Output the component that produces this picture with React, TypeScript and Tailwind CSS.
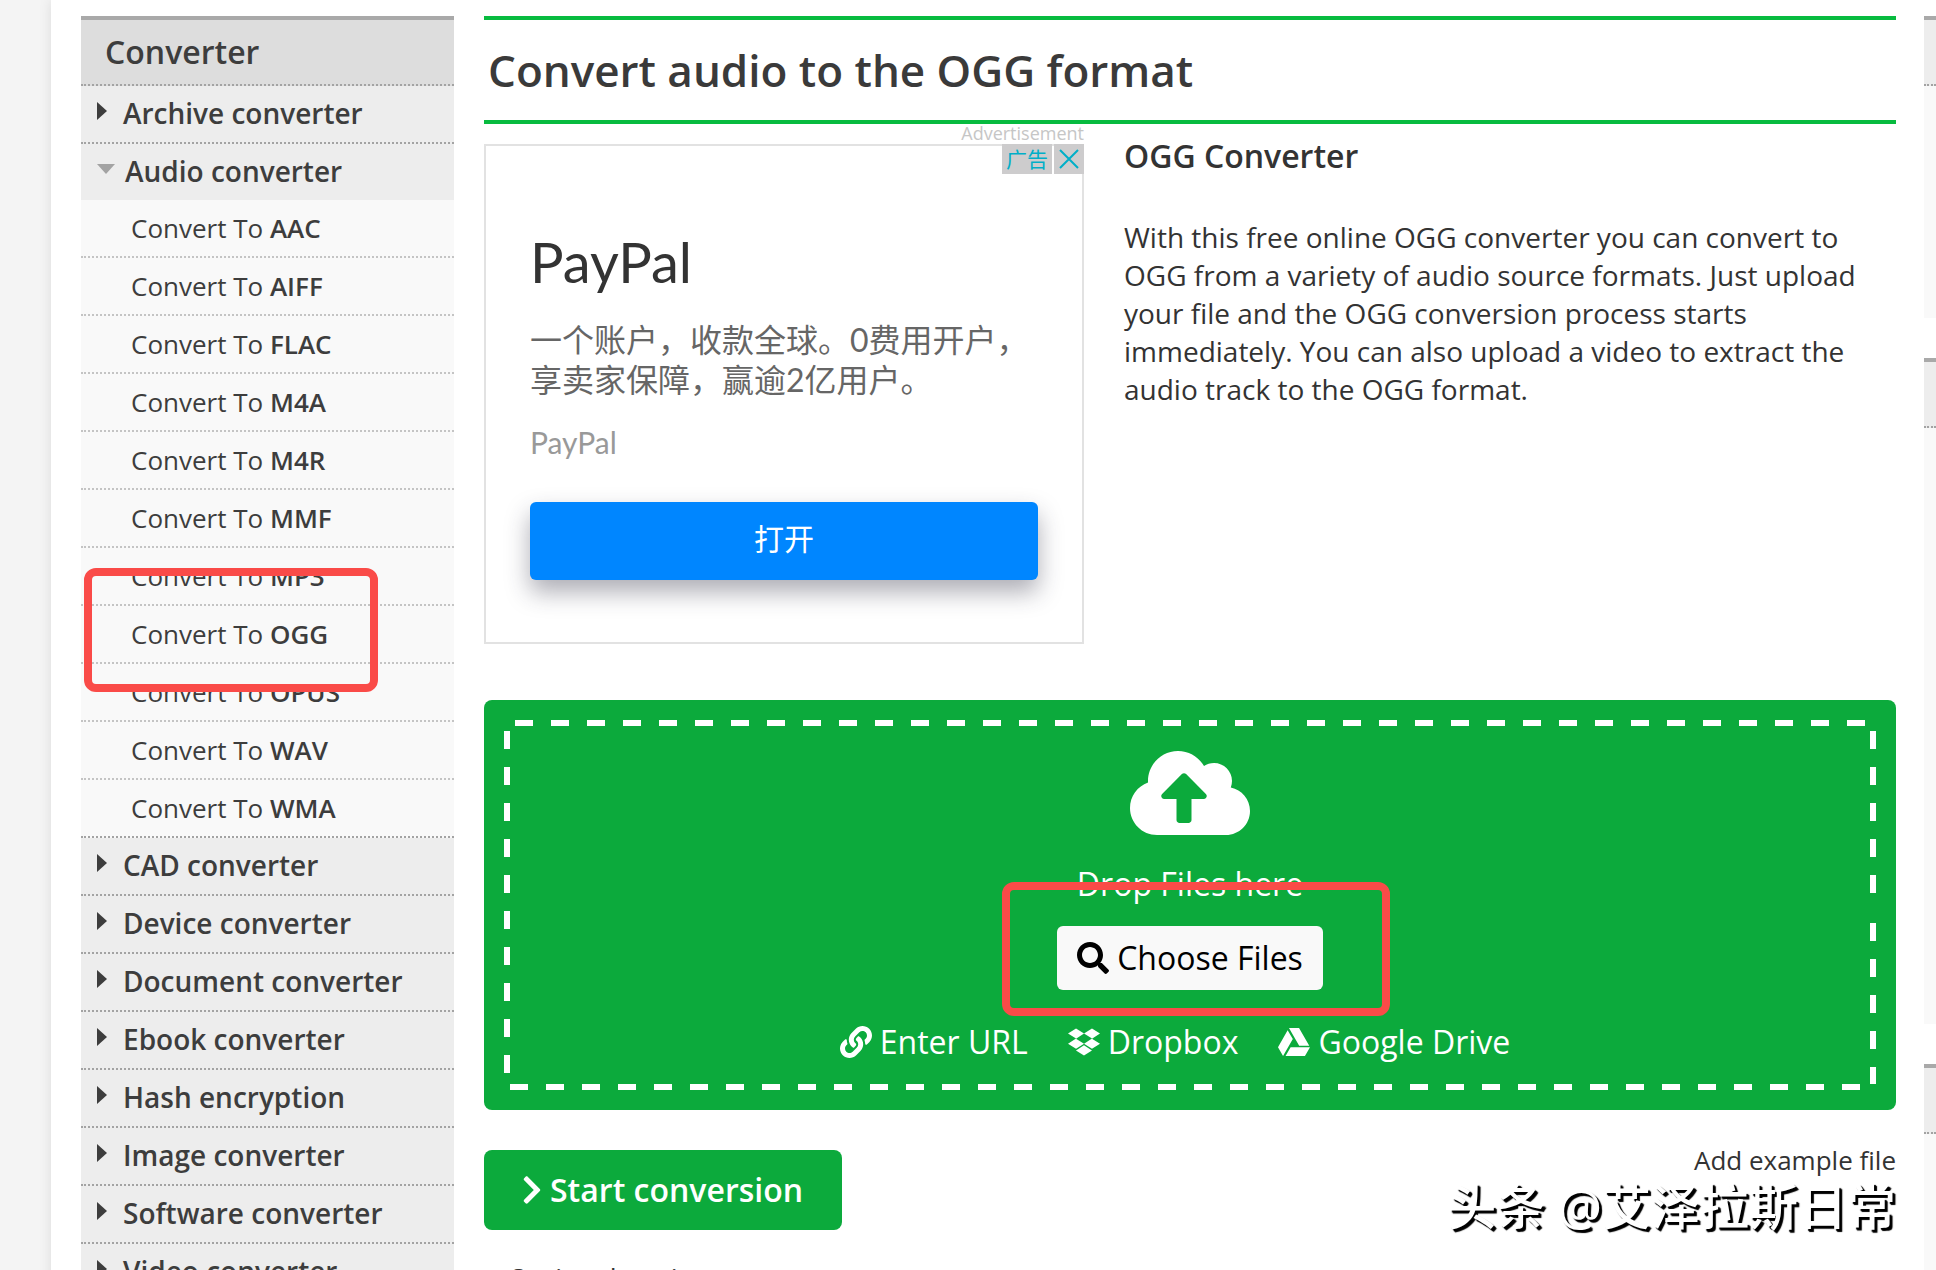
import { useState } from "react";
import {
  FaChevronRight,
  FaCloudUploadAlt,
  FaDropbox,
  FaGoogleDrive,
  FaLink,
  FaSearch,
} from "react-icons/fa";

const audioFormats = ["AAC", "AIFF", "FLAC", "M4A", "M4R", "MMF", "MP3", "OGG", "OPUS", "WAV", "WMA"];

const categories = [
  "Archive converter",
  "Audio converter",
  "CAD converter",
  "Device converter",
  "Document converter",
  "Ebook converter",
  "Hash encryption",
  "Image converter",
  "Software converter",
  "Video converter",
];

function Sidebar() {
  const [open, setOpen] = useState("Audio converter");

  return (
    <nav className="w-[373px] shrink-0 border-t-4 border-[#a9a9a9] text-[#3d3d3d]">
      <h2 className="flex h-[66px] items-center border-b-2 border-dotted border-[#a3a3a3] bg-[#ddd] pl-6 text-[32px] font-semibold">
        Converter
      </h2>
      <ul>
        {categories.map((name) => {
          const expanded = name === open;
          return (
            <li key={name}>
              <button
                type="button"
                aria-expanded={expanded}
                onClick={() => setOpen(expanded ? "" : name)}
                className={`flex w-full items-center bg-[#ededed] pb-[2px] pl-4 text-left text-[28px] font-semibold ${
                  expanded ? "h-14" : "h-[58px] border-b-2 border-dotted border-[#a3a3a3]"
                }`}
              >
                {expanded ? (
                  <svg viewBox="0 0 18 10" className="mr-[10px] mb-1 h-[10px] w-[18px] text-[#a3a3a3]">
                    <path d="M0 0h18L9 10z" fill="currentColor" />
                  </svg>
                ) : (
                  <svg viewBox="0 0 10 18" className="mr-4 mb-1 h-[18px] w-[10px]">
                    <path d="M0 0v18l10-9z" fill="currentColor" />
                  </svg>
                )}
                {name}
              </button>
              {expanded && name === "Audio converter" ? (
                <ul className="relative">
                  {audioFormats.map((format) => (
                    <li
                      key={format}
                      className={`h-[58px] border-b-2 border-dotted bg-[#f9f9f9] ${
                        format === "WMA" ? "border-[#a3a3a3]" : "border-[#c4c4c4]"
                      }`}
                    >
                      <a href="#convert" className="flex h-full items-center pl-[50px] text-[26px]">
                        <span>
                          Convert To <b className="font-semibold">{format}</b>
                        </span>
                      </a>
                    </li>
                  ))}
                  <li
                    aria-hidden="true"
                    className="pointer-events-none absolute top-[368px] left-[3px] h-[124px] w-[294px] rounded-xl border-8 border-[#fa4b48]"
                  />
                </ul>
              ) : null}
            </li>
          );
        })}
      </ul>
    </nav>
  );
}

function Advertisement() {
  return (
    <div className="w-[600px] shrink-0">
      <p className="h-5 text-right text-[18px] leading-[18px] text-[#c6c6c6]">Advertisement</p>
      <div className="relative border-2 border-[#e2e2e2] px-11 pt-[86px] pb-[62px] font-[Lato,'Noto_Sans_CJK_SC',sans-serif]">
        <div className="absolute -top-[2px] -right-[2px] flex gap-[2px] text-[#00afc8]">
          <span className="flex h-[30px] w-[50px] items-center justify-center bg-[#cdcccd] text-[21px]">广告</span>
          <button
            type="button"
            aria-label="Close"
            className="flex h-[30px] w-[30px] items-center justify-center bg-[#cdcccd]"
          >
            <svg viewBox="0 0 20 20" className="h-5 w-5" fill="none" stroke="currentColor" strokeWidth="2">
              <path d="M1 1l18 18M19 1L1 19" />
            </svg>
          </button>
        </div>
        <h3 className="text-[56px] leading-[60px] text-[#333]">PayPal</h3>
        <p className="mt-7 text-[32px] leading-10 whitespace-nowrap text-[#666]">
          一个账户，收款全球。0费用开户，
          <br />
          享卖家保障，赢逾2亿用户。
        </p>
        <p className="mt-5 text-[30px] leading-[44px] text-[#999]">PayPal</p>
        <button
          type="button"
          className="mt-[38px] h-[78px] w-full rounded-md bg-[#0086ff] pb-[6px] text-[30px] text-white shadow-[0_12px_24px_rgba(40,40,60,0.38)]"
        >
          打开
        </button>
      </div>
    </div>
  );
}

function DropZone() {
  return (
    <section className="relative mt-14 rounded-lg bg-[#0caa3c] px-5 py-5 text-white">
      <svg className="pointer-events-none absolute inset-5 h-[370px] w-[calc(100%-40px)]" stroke="#fff" strokeWidth="6">
        <line x1="11" y1="3" x2="100%" y2="3" strokeDasharray="18 18" />
        <line x1="6" y1="367" x2="99%" y2="367" strokeDasharray="18 18" />
        <line x1="3" y1="11" x2="3" y2="364" strokeDasharray="18 18" />
        <svg x="100%" overflow="visible">
          <line x1="-3" y1="11" x2="-3" y2="173" strokeDasharray="18 18" />
          <line x1="-3" y1="203" x2="-3" y2="364" strokeDasharray="18 18" />
        </svg>
      </svg>
      <div className="flex h-[370px] flex-col items-center pt-[25px] text-[32px] leading-[44px]">
        <FaCloudUploadAlt className="h-24 w-[120px]" />
        <p className="mt-[21px]">Drop Files here</p>
        <div className="relative mt-5">
          <button
            type="button"
            className="flex h-16 items-center gap-2 rounded-md bg-[#f9f9f9] px-5 text-black"
          >
            <FaSearch />
            Choose Files
          </button>
          <div
            aria-hidden="true"
            className="pointer-events-none absolute -top-11 -right-[67px] -bottom-[26px] -left-[55px] rounded-xl border-8 border-[#fa4b48]"
          />
        </div>
        <div className="mt-[30px] mr-[30px] flex gap-10">
          <a href="#url" className="flex items-center gap-2">
            <FaLink />
            Enter URL
          </a>
          <a href="#dropbox" className="flex items-center gap-2">
            <FaDropbox />
            Dropbox
          </a>
          <a href="#drive" className="flex items-center gap-2">
            <FaGoogleDrive />
            Google Drive
          </a>
        </div>
      </div>
    </section>
  );
}

function AsideBox({ className }: { className: string }) {
  return (
    <div className={`border-t-4 border-[#a9a9a9] bg-[#f9f9f9] ${className}`}>
      <div className="h-[66px] border-b-2 border-dotted border-[#a3a3a3] bg-[#ededed]" />
    </div>
  );
}

export default function App() {
  return (
    <div className="h-screen overflow-hidden bg-[#f4f4f4] pl-[51px] font-['Open_Sans','Noto_Sans_CJK_SC',sans-serif]">
      <div className="flex min-h-full bg-white pt-4 pl-[30px] text-[#333] shadow-[0_0_12px_rgba(0,0,0,0.1)]">
        <Sidebar />

        <main className="ml-[30px] min-w-0 flex-1">
          <h1 className="flex h-[108px] items-center border-y-4 border-[#07bb3f] pl-1 text-[44px] font-semibold text-[#3a3a3a]">
            Convert audio to the OGG format
          </h1>

          <div className="flex gap-10">
            <Advertisement />
            <div className="pt-2">
              <h2 className="text-[32px] leading-[48px] font-semibold">OGG Converter</h2>
              <p className="mt-[38px] text-[28px] leading-[38px]">
                With this free online OGG converter you can convert to OGG from a variety of audio source formats. Just
                upload your file and the OGG conversion process starts immediately. You can also upload a video to
                extract the audio track to the OGG format.
              </p>
            </div>
          </div>

          <DropZone />

          <div className="mt-10 flex items-start justify-between">
            <button
              type="button"
              className="flex h-20 w-[358px] items-center rounded-lg bg-[#0caa3c] pl-8 text-[32px] font-semibold text-white"
            >
              <FaChevronRight />
              <span className="pl-[2px]">Start conversion</span>
            </button>
            <div className="relative">
              <a href="#example" className="block text-[26px] leading-5">
                Add example file
              </a>
              <p className="absolute top-7 right-0 text-[49px] leading-[56px] font-medium whitespace-nowrap text-white [text-shadow:2px_2px_1px_#000,3px_3px_1px_#000]">
                头条 @艾泽拉斯日常
              </p>
            </div>
          </div>

          <h2 className="mt-7 pl-6 text-[27px] leading-[42px]">Optional settings</h2>
        </main>

        <aside className="ml-7 w-3 shrink-0">
          <AsideBox className="h-[302px]" />
          <AsideBox className="mt-10 h-[666px]" />
          <AsideBox className="mt-10 h-[300px]" />
        </aside>
      </div>
    </div>
  );
}
